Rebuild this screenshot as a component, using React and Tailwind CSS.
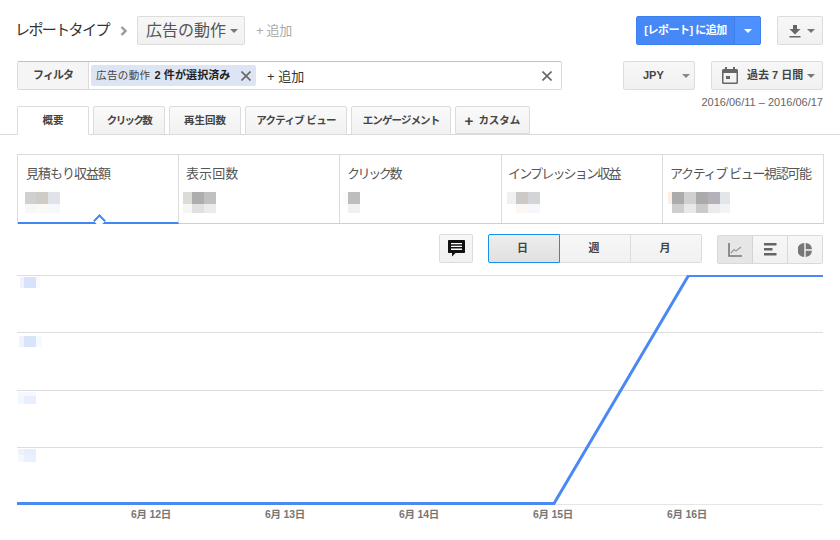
const FONT = "font-['Liberation_Sans','Noto_Sans_CJK_JP',sans-serif]";

function Caret({ className = "" }) {
  return <span className={`inline-block w-0 h-0 border-x-[4px] border-x-transparent border-t-[4px] ${className}`} />;
}

function Mosaic({ rows, cellH }) {
  return (
    <div className="flex flex-col">
      {rows.map((row, i) => (
        <div key={i} className="flex" style={{ height: cellH[i] }}>
          {row.map(([w, c], j) => (
            <div key={j} style={{ width: w, background: c }} />
          ))}
        </div>
      ))}
    </div>
  );
}

const cards = [
  {
    title: "見積もり収益額", w: "w-[161px]", active: true, ml: "ml-[7px]", pl: "pl-[8px]", tr: "tracking-[-1px]",
    rows: [[[11, "#d0d0d0"], [12, "#cfccc8"], [12, "#e0e4ea"]], [[11, "#f7f7f7"], [12, "#faf9f6"], [12, "#f6f8fb"]]],
  },
  {
    title: "表示回数", w: "w-[161px]", ml: "ml-[4px]", pl: "pl-[7px]", tr: "tracking-[0.1px]",
    rows: [[[9, "#dcdbd7"], [12, "#adadad"], [12, "#c0c0c0"]], [[9, "#f7f6f4"], [12, "#e0e0e0"], [12, "#ebebed"]]],
  },
  {
    title: "クリック数", w: "w-[162px]", ml: "ml-[3px]", pl: "pl-[7px]", tr: "tracking-[-2.4px]",
    rows: [[[5, "#fbfbfb"], [12, "#bdbdbd"]], [[5, "#ffffff"], [12, "#f1f0ee"]]],
  },
  {
    title: "インプレッション収益", w: "w-[161px]", ml: "ml-[5px]", pl: "pl-[6px]", tr: "tracking-[-1.8px]",
    rows: [[[9, "#f0f0f0"], [12, "#ccc9c6"], [12, "#d2d4d7"]], [[9, "#ffffff"], [12, "#faf7f4"], [12, "#f5f7fa"]]],
  },
  {
    title: "アクティブ ビュー視認可能", w: "flex-1", ml: "ml-[5px]", pl: "pl-[7px]", tr: "tracking-[-1.35px]",
    rows: [
      [[4, "#fbeee3"], [12, "#ababab"], [12, "#d0d0ce"], [12, "#aaaaaa"], [12, "#b4b2b8"], [10, "#e2e6ea"]],
      [[4, "#ffffff"], [12, "#d0cecc"], [12, "#e8e8e6"], [12, "#cacaca"], [12, "#ebebeb"], [10, "#f1f3f5"]],
    ],
  },
];

const tabs = [
  ["概要", "w-[72px]", ""],
  ["クリック数", "w-[72px]", "tracking-[-1.6px]"],
  ["再生回数", "w-[72px]", ""],
  ["アクティブ ビュー", "w-[102px]", "tracking-[-0.7px]"],
  ["エンゲージメント", "w-[100px]", "tracking-[-0.9px]"],
];

const gridRows = [
  { h: "h-[57px]", m: "ml-[3px] mt-[1px]", rows: [[[4, "#eef3fe"], [12, "#d8e3fb"], [4, "#f8faff"]]], cellH: [11] },
  { h: "h-[58px]", m: "ml-[2px] mt-[3px]", rows: [[[5, "#eef3fe"], [12, "#d9e4fb"], [6, "#f6f9fe"]]], cellH: [11] },
  { h: "h-[57px]", m: "ml-[1px] mt-[1px]", rows: [[[18, "#f5f8fe"]], [[6, "#f2f6fe"], [12, "#e8effc"]]], cellH: [4, 8] },
  { h: "h-[57px]", m: "ml-[1px] mt-[1px]", rows: [[[6, "#eef2fb"], [12, "#e6edfc"]], [[6, "#f4f7fd"], [12, "#eaf0fd"]]], cellH: [6, 7] },
];

const btn = "border border-[#dcdcdc] rounded-[2px] bg-gradient-to-b from-[#f7f7f7] to-[#f1f1f1]";

export default function App() {
  return (
    <div className={`w-[840px] h-[540px] bg-white overflow-hidden ${FONT} text-[#444]`}>
      {/* Header row */}
      <div className="flex items-center h-[29px] mt-[16px] pl-[15px] pr-[17px]">
        <span className="text-[15px] text-[#333] w-[95px] whitespace-nowrap tracking-[-1.600px]">レポートタイプ</span>
        <svg width="8" height="10" viewBox="0 0 8 10" className="ml-[10px] mr-[9px]">
          <path d="M1.500 1 L5.500 5 L1.500 9" fill="none" stroke="#999" strokeWidth="2.400" />
        </svg>
        <div className={`${btn} w-[108px] h-[29px] flex items-center pl-[8px] text-[16px] text-[#555]`}>
          <span className="whitespace-nowrap">広告の動作</span>
          <Caret className="border-t-[#777] ml-[4px]" />
        </div>
        <span className="ml-[11px] text-[13px] text-[#aaa] tracking-[-0.300px]">+ 追加</span>
        <div className="ml-auto flex h-[29px] w-[125px] rounded-[2px] border border-[#3b82f0] bg-[#4d90fe] text-white text-[11px] font-bold">
          <div className="flex-1 flex items-center justify-center whitespace-nowrap bg-[#4688f6] border-r border-[#3f7fe8] tracking-[-0.500px]">[レポート] に追加</div>
          <div className="w-[25px] flex items-center justify-center"><Caret className="border-t-white" /></div>
        </div>
        <div className={`${btn} ml-[16px] w-[46px] h-[29px] flex items-center pl-[11px] gap-[6px]`}>
          <svg width="12" height="14" viewBox="0 0 12 14"><path d="M4 1h4v4h3.500L6 10.500 .5 5H4z M.5 12h11v1.500H.5z" fill="#666" /></svg>
          <Caret className="border-t-[#777]" />
        </div>
      </div>

      {/* Filter row */}
      <div className="flex items-start h-[29px] mt-[16px] pl-[17px] pr-[17px]">
        <div className="flex items-center w-[545px] h-[29px] border border-[#d9d9d9] border-t-[#c0c0c0] rounded-[2px]">
          <div className="w-[71px] h-full flex items-center justify-center bg-[#f5f5f5] border-r border-[#dcdcdc] text-[11px] font-bold text-[#444] tracking-[-1px]">フィルタ</div>
          <div className="ml-[2px] w-[165px] h-[21px] flex items-center rounded-[2px] bg-[#dde5f5] pl-[5px] text-[10.500px] text-[#444] whitespace-nowrap">
            <span className="tracking-[0.400px] mr-[4px]">広告の動作</span>
            <span className="font-bold text-[#222] text-[11px] tracking-[0.100px]">2 件が選択済み</span>
            <svg width="10" height="10" viewBox="0 0 10 10" className="ml-auto mr-[5px]">
              <path d="M.5 .5L9.500 9.500M9.500 .5L.5 9.500" stroke="#666" strokeWidth="1.600" />
            </svg>
          </div>
          <span className="ml-[11px] mt-[2px] text-[13px] text-[#333] whitespace-nowrap">+ 追加</span>
          <svg width="10" height="10" viewBox="0 0 10 10" className="ml-auto mr-[9px]">
            <path d="M.5 .5L9.500 9.500M9.500 .5L.5 9.500" stroke="#666" strokeWidth="1.600" />
          </svg>
        </div>
        <div className={`${btn} ml-[61px] w-[72px] h-[29px] flex items-center pl-[19px] text-[11px] font-bold text-[#444]`}>
          JPY
          <Caret className="border-t-[#888] ml-[18px]" />
        </div>
        <div className={`${btn} ml-[16px] w-[112px] h-[29px] flex items-center pl-[10px] text-[11px] font-bold text-[#444] whitespace-nowrap`}>
          <svg width="16" height="17" viewBox="0 0 16 17">
            <path d="M3 0h2v2h6V0h2v2h1.500c.8 0 1.500.7 1.500 1.500v12c0 .8-.7 1.500-1.500 1.500h-13C.7 17 0 16.300 0 15.500v-12C0 2.700.7 2 1.500 2H3zM1.500 6v9.500h13V6zM4 9h4v3H4z" fill="#666" />
          </svg>
          <span className="ml-[9px]">過去 7 日間</span>
          <Caret className="border-t-[#777] ml-[4px]" />
        </div>
      </div>

      {/* Date range */}
      <div className="h-[16px] mt-[4px] pr-[17px] text-right text-[11px] leading-[16px] text-[#666]">2016/06/11 – 2016/06/17</div>

      {/* Tabs */}
      <div className="flex gap-[4px] h-[29px] mt-[-4px] pl-[17px] border-b border-[#d9d9d9]">
        {tabs.map(([label, w, tr], i) => (
          <div
            key={label}
            className={`${w} ${tr} h-[29px] pt-[1px] flex items-center justify-center whitespace-pre text-[10.500px] font-bold text-[#444] rounded-t-[2px] border border-[#dcdcdc] ${
              i === 0 ? "bg-white border-b-white" : "h-[28px] bg-gradient-to-b from-[#fafafa] to-[#f1f1f1]"
            }`}
          >
            {label}
          </div>
        ))}
        <div className="w-[75px] h-[28px] pt-[1px] flex items-center justify-center gap-[5px] whitespace-pre text-[10.500px] font-bold text-[#444] rounded-t-[2px] border border-[#dcdcdc] bg-gradient-to-b from-[#fafafa] to-[#f1f1f1]">
          <span className="text-[15px] leading-[15px]">+</span>
          <span>カスタム</span>
        </div>
      </div>

      {/* Metric cards */}
      <div className="flex w-[807px] h-[70px] mt-[19px] ml-[17px] border border-[#dcdcdc] border-b-[#cfcfcf]">
        {cards.map((c, i) => (
          <div key={c.title} className={`${c.w} relative flex flex-col ${i < 4 ? "border-r border-[#dcdcdc]" : ""} ${c.active ? "border-b-2 border-b-[#4285f4] h-[69px]" : ""}`}>
            <div className={`${c.pl} ${c.tr} pt-[10px] text-[13px] leading-[18px] text-[#555] whitespace-nowrap`}>{c.title}</div>
            <div className={`${c.ml} mt-[9px]`}>
              <Mosaic rows={c.rows} cellH={[12, 9]} />
            </div>
            {c.active && (
              <span className="absolute left-[77px] bottom-[-3px] w-[9px] h-[9px] rotate-45 bg-white border-l-2 border-t-2 border-[#4285f4]" />
            )}
          </div>
        ))}
      </div>

      {/* Controls */}
      <div className="flex items-start h-[30px] mt-[10px] pl-[439px]">
        <div className={`${btn} w-[34px] h-[29px] flex items-center justify-center`}>
          <svg width="17" height="17" viewBox="0 0 17 17">
            <path d="M0 1C0 .4.400 0 1 0h15c.6 0 1 .4 1 1v11c0 .6-.4 1-1 1H7.500L4 16.500V13H1c-.6 0-1-.4-1-1z" fill="#111" />
            <path d="M3 3h11v1.300H3zM3 5.800h11v1.300H3zM3 8.600h11v1.300H3z" fill="#fff" />
          </svg>
        </div>
        <div className="ml-[15px] flex h-[29px] text-[11px] font-bold text-[#444]">
          <div className="w-[72px] pr-[3px] flex items-center justify-center rounded-l-[2px] border border-[#1a8fe8] bg-gradient-to-b from-[#eeeeee] to-[#e0e0e0]">日</div>
          <div className="w-[71px] pr-[2px] flex items-center justify-center border-y border-r border-[#dcdcdc] bg-gradient-to-b from-[#f7f7f7] to-[#f1f1f1]">週</div>
          <div className="w-[71px] pr-[2px] flex items-center justify-center rounded-r-[2px] border-y border-r border-[#dcdcdc] bg-gradient-to-b from-[#f7f7f7] to-[#f1f1f1]">月</div>
        </div>
        <div className="ml-[15px] mt-[1px] flex h-[29px] w-[106px] rounded-[2px] border border-[#d9d9d9]">
          <div className="w-[35px] flex items-center justify-center bg-[#e6e6e6] border-r border-[#d4d4d4]">
            <svg width="14" height="14" viewBox="0 0 14 14">
              <path d="M1 0v13h13" fill="none" stroke="#777" strokeWidth="1.600" />
              <path d="M3 10L6 6.500 8 8 13 4" fill="none" stroke="#999" strokeWidth="1.200" />
            </svg>
          </div>
          <div className="w-[35px] flex items-center justify-center bg-gradient-to-b from-[#f7f7f7] to-[#f1f1f1] border-r border-[#d9d9d9]">
            <svg width="13" height="13" viewBox="0 0 13 13">
              <path d="M0 0h12.500v2.500H0zM0 5h8.500v2.500H0zM0 10h12.500v2.500H0z" fill="#666" />
            </svg>
          </div>
          <div className="flex-1 flex items-center justify-center bg-gradient-to-b from-[#f7f7f7] to-[#f1f1f1]">
            <svg width="14" height="14" viewBox="0 0 14 14">
              <path d="M6.300 0v14A7 7 0 0 1 6.300 0zM7.700 0A7 7 0 0 1 14 6.300H7.700zM7.700 7.700H14A7 7 0 0 1 7.700 14z" fill="#777" />
            </svg>
          </div>
        </div>
      </div>

      {/* Chart */}
      <div className="relative w-[806px] ml-[17px] mt-[11px]">
        {gridRows.map((r, i) => (
          <div key={i} className={`${r.h} border-t border-[#dddddd]`}>
            <div className={`${r.m} w-fit`}>
              <Mosaic rows={r.rows} cellH={r.cellH} />
            </div>
          </div>
        ))}
        <div className="h-[1px] bg-[#e6e6e6]" />
        <svg width="806" height="232" viewBox="0 0 806 232" className="absolute left-0 top-0">
          <path d="M0 228.500H537L671.500 0.500H806" fill="none" stroke="#4a88f4" strokeWidth="3" strokeLinejoin="miter" />
        </svg>
        <div className="flex pl-[67px] pt-[2px] text-[10.500px] font-bold text-[#777] leading-[14px]">
          {["6月 12日", "6月 13日", "6月 14日", "6月 15日", "6月 16日"].map((d) => (
            <div key={d} className="w-[134px] text-center whitespace-nowrap tracking-[-0.200px]">{d}</div>
          ))}
        </div>
      </div>
    </div>
  );
}
